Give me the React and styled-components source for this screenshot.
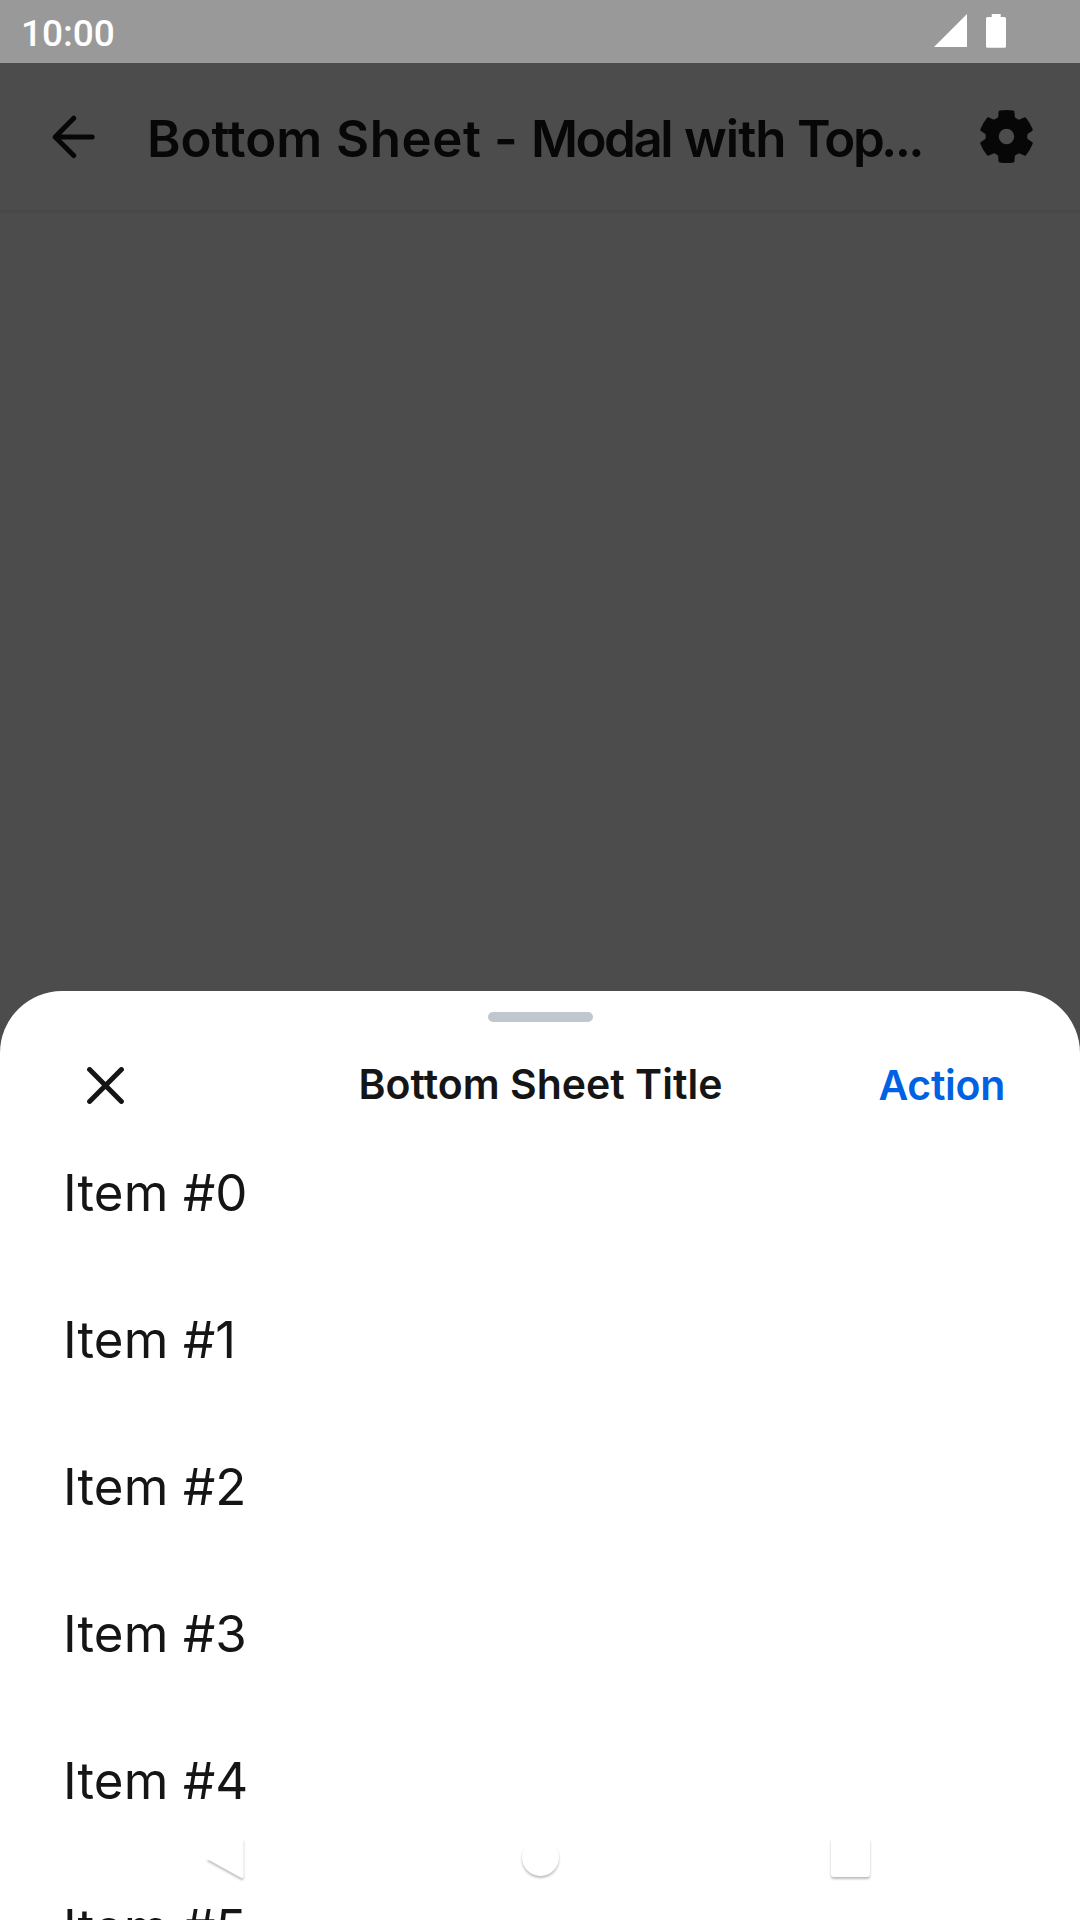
import React from "react";
import styled, { createGlobalStyle } from "styled-components";

const GlobalStyle = createGlobalStyle`
  * { box-sizing: border-box; }
  html, body { margin: 0; padding: 0; overflow: hidden; background: #4c4c4c; }
`;

const Screen = styled.div`
  position: relative;
  display: flex;
  flex-direction: column;
  width: 1080px;
  height: 1920px;
  overflow: hidden;
  background: #4c4c4c;
  font-family: Inter, "Liberation Sans", sans-serif;
`;

const StatusBar = styled.header`
  display: flex;
  align-items: center;
  justify-content: space-between;
  flex: 0 0 63px;
  padding: 0 74px 0 21px;
  background: #999;
`;

const Clock = styled.span`
  padding-top: 3px;
  color: #fff;
  font: 500 37px/43px Roboto, sans-serif;
`;

const StatusIcons = styled.div`
  display: flex;
  gap: 19px;
  height: 35px;
  svg { display: block; }
`;

const AppBar = styled.div`
  display: flex;
  align-items: center;
  flex: 0 0 147px;
  padding: 0 46px 0 52px;
`;

const AppTitle = styled.h1`
  flex: 1;
  display: flex;
  margin: 0 0 0 51px;
  padding-top: 4px;
  color: #070707;
  font-size: 51px;
  font-weight: 600;
  line-height: 64px;
  white-space: pre;
`;

const Word = styled.span`
  flex: 0 0 ${(p) => p.$width}px;
  min-width: 0;
  letter-spacing: ${(p) => p.$tracking}px;
`;

const Scrim = styled.div`
  flex: 0 0 781px;
  background: linear-gradient(#464646, #494949 2px, #4c4c4c 5px);
`;

const Sheet = styled.section`
  display: flex;
  flex-direction: column;
  flex: 0 0 929px;
  overflow: hidden;
  border-radius: 62px 62px 0 0;
  background: #fff;
`;

const Handle = styled.div`
  flex: 0 0 10px;
  width: 105px;
  margin: 21px auto 0 488px;
  border-radius: 5px;
  background: #c1c7cf;
`;

const SheetHeader = styled.div`
  display: grid;
  grid-template-columns: 1fr auto 1fr;
  align-items: center;
  flex: 0 0 97px;
  padding: 30px 75px 0 87px;
`;

const SheetTitle = styled.h2`
  margin: 0 0 0 -11px;
  padding-bottom: 3px;
  color: #151515;
  font-size: 41px;
  font-weight: 600;
  line-height: 50px;
  letter-spacing: 0;
  white-space: nowrap;
`;

const CloseButton = styled.button`
  display: block;
  width: 37px;
  height: 37px;
  padding: 0;
  border: 0;
  background: none;
  svg { display: block; }
`;

const ActionButton = styled.button`
  justify-self: end;
  padding: 0 0 2px;
  border: 0;
  background: none;
  color: #0062e3;
  font: 600 41px/50px Inter, "Liberation Sans", sans-serif;
  letter-spacing: -0.3px;
`;

const List = styled.ul`
  display: flex;
  flex-direction: column;
  margin: 0;
  padding: 0;
  list-style: none;
`;

const Item = styled.li`
  display: flex;
  align-items: center;
  flex: 0 0 147px;
  padding: 0 63px;
  color: #151515;
  font-size: 51px;
  font-weight: 400;
  letter-spacing: 0.1px;
`;

const NavOverlay = styled.nav`
  position: absolute;
  left: 0;
  bottom: 0;
  display: flex;
  justify-content: space-between;
  width: 1080px;
  height: 126px;
  padding: 32px 198px 0 195px;
`;

const NavIcon = styled.svg`
  display: block;
  width: 64px;
  height: 64px;
  fill: #fff;
  filter: drop-shadow(0 2px 1px rgba(0, 0, 0, 0.26));
`;

const toothSteps = [
  ["L", [-24.5, -59]],
  ["L", [-23.5, -74]],
  ["Q", [-23, -77.5], [-20, -78]],
  ["Q", [0, -81], [20, -78]],
  ["Q", [23, -77.5], [23.5, -74]],
  ["L", [24.5, -59]],
  ["C", [25.6, -55.5], [35.3, -49.9], [38.8, -50.7]],
];

function gearPath() {
  let d = "";
  for (let i = 0; i < 6; i += 1) {
    const a = (i * Math.PI) / 3;
    const place = ([x, y]) =>
      `${(x * Math.cos(a) - y * Math.sin(a)).toFixed(2)} ${(x * Math.sin(a) + y * Math.cos(a)).toFixed(2)}`;
    toothSteps.forEach(([cmd, ...pts], n) => {
      d += (i === 0 && n === 0 ? "M" : cmd) + pts.map(place).join(" ");
    });
  }
  return `${d}ZM-23 0a23 23 0 1 0 46 0a23 23 0 1 0-46 0Z`;
}

const BackIcon = () => (
  <svg width="44" height="44" viewBox="0 0 44 44" fill="none" stroke="#070707" strokeWidth="5" strokeLinecap="round" strokeLinejoin="round">
    <path d="M21.7 3.2L3.2 22L21.7 40.5M3.2 22H40.2" />
  </svg>
);

const GearIcon = () => (
  <svg width="55" height="55" viewBox="-81.5 -82.5 163 165" preserveAspectRatio="none">
    <path d={gearPath()} fill="#070707" fillRule="evenodd" />
  </svg>
);

const titleWords = [
  { text: "Bottom ", width: 189, tracking: -0.1 },
  { text: "Sheet ", width: 158, tracking: 0.6 },
  { text: "- ", width: 37, tracking: 0 },
  { text: "Modal ", width: 153, tracking: -2.5 },
  { text: "with ", width: 113, tracking: -1 },
  { text: "Top", width: 84, tracking: -2.4 },
  { text: "...", width: 36, tracking: -2.6 },
];

export default function App() {
  return (
    <Screen>
      <GlobalStyle />
      <StatusBar>
        <Clock>10:00</Clock>
        <StatusIcons>
          <svg width="33" height="35" viewBox="0 0 33 35" fill="#fff"><path d="M0 33L33 0V33Z" /></svg>
          <svg width="20" height="35" viewBox="0 0 20 35" fill="#fff"><path d="M5.7 0H14.7V3H18.5A1.5 1.5 0 0 1 20 4.5V32.3A1.5 1.5 0 0 1 18.5 33.8H1.5A1.5 1.5 0 0 1 0 32.3V4.5A1.5 1.5 0 0 1 1.5 3H5.7Z" /></svg>
        </StatusIcons>
      </StatusBar>
      <AppBar>
        <BackIcon />
        <AppTitle>
          {titleWords.map((w) => (
            <Word key={w.text} $width={w.width} $tracking={w.tracking}>{w.text}</Word>
          ))}
        </AppTitle>
        <GearIcon />
      </AppBar>
      <Scrim />
      <Sheet>
        <Handle />
        <SheetHeader>
          <CloseButton aria-label="Close">
            <svg width="37" height="37" viewBox="0 0 37 37" fill="none" stroke="#151515" strokeWidth="5" strokeLinecap="round">
              <path d="M2.6 2.6L34.4 34.4M34.4 2.6L2.6 34.4" />
            </svg>
          </CloseButton>
          <SheetTitle>Bottom Sheet Title</SheetTitle>
          <ActionButton>Action</ActionButton>
        </SheetHeader>
        <List>
          {[0, 1, 2, 3, 4, 5].map((n) => (
            <Item key={n}>Item #{n}</Item>
          ))}
        </List>
      </Sheet>
      <NavOverlay>
        <NavIcon viewBox="0 0 64 64"><path d="M12 32.5L46 12.5Q48.5 11.5 48.5 14V50Q48.5 53 46 51.8L12 33Z" /></NavIcon>
        <NavIcon viewBox="0 0 64 64"><circle cx="33.5" cy="31.5" r="18.5" /></NavIcon>
        <NavIcon viewBox="0 0 64 64"><rect x="13" y="12" width="39" height="39" rx="3" /></NavIcon>
      </NavOverlay>
    </Screen>
  );
}
